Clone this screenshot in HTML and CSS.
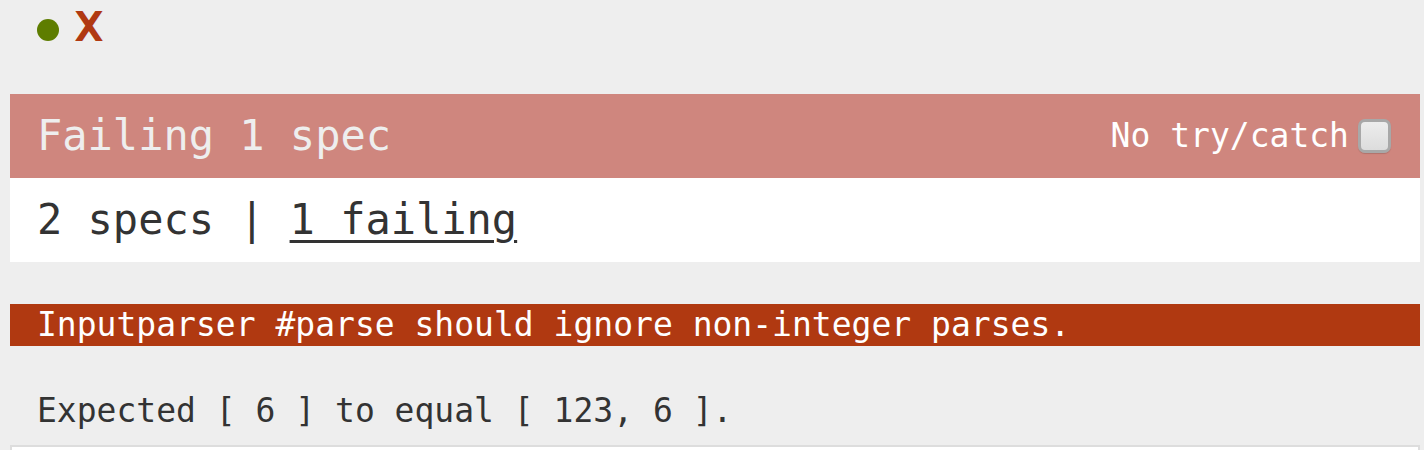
FILE: index.html
```
<!DOCTYPE html>
<html>
<head>
<meta charset="utf-8">
<link rel="stylesheet" href="styles.css">
</head>
<body>
<div class="reporter">
  <ul class="symbols">
    <li class="passed"></li>
    <li class="failed">X</li>
  </ul>
  <div class="bar failing">
    <span class="bar-text">Failing 1 spec</span>
    <label class="trycatch">No try/catch<input type="checkbox" class="check"></label>
  </div>
  <div class="bar menu">2 specs | <a class="link" href="#">1 failing</a></div>
  <div class="results">
    <div class="spec-detail">
      <div class="description">Inputparser #parse should ignore non-integer parses.</div>
      <div class="message">Expected [ 6 ] to equal [ 123, 6 ].</div>
      <div class="stack"></div>
    </div>
  </div>
</div>
</body>
</html>
```
FILE: styles.css
```
html, body {
  margin: 0;
  padding: 0;
  background: #eeeeee;
  overflow: hidden;
}
.reporter {
  margin: 0 4px 0 10px;
  font-family: "DejaVu Sans Mono", "Liberation Mono", monospace;
  color: #333333;
  font-size: 33px;
  line-height: 42px;
}
.symbols {
  list-style: none;
  margin: 0;
  padding: 0 0 0 27px;
  height: 94px;
  display: flex;
  align-items: flex-start;
}
.symbols .passed {
  width: 22px;
  height: 22px;
  border-radius: 50%;
  background: #5e7d00;
  margin-top: 19px;
}
.symbols .failed {
  margin-left: 18px;
  margin-top: 7px;
  color: #b03911;
  font-weight: bold;
  font-size: 40px;
  line-height: 40px;
  transform: scaleX(1.2);
}
.bar {
  display: flex;
  align-items: center;
  font-size: 42px;
  line-height: 84px;
  height: 84px;
  padding: 0 27px;
}
.failing {
  background: #cf867e;
  color: #eeeeee;
  justify-content: space-between;
}
.trycatch {
  display: flex;
  align-items: center;
  font-size: 33px;
  color: #ffffff;
  margin-right: 2px;
}
.check {
  -webkit-appearance: none;
  appearance: none;
  width: 33px;
  height: 34px;
  margin: 0 0 0 9px;
  border: 3px solid #a8a8a8;
  border-radius: 7px;
  background: linear-gradient(#ededed, #dcdcdc);
  box-sizing: border-box;
  box-shadow: 0 1px 1px rgba(0,0,0,0.15);
}
.menu {
  background: #ffffff;
  color: #333333;
}
.link {
  color: #333333;
  margin-left: 25px;
  text-decoration: underline;
  text-decoration-thickness: 3px;
  text-underline-offset: 6px;
}
.results {
  margin-top: 42px;
}
.description {
  background: #b03911;
  color: #ffffff;
  padding: 0 27px;
  line-height: 42px;
}
.message {
  padding: 44px 27px 0;
  line-height: 42px;
  color: #333333;
}
.stack {
  margin-top: 13px;
  height: 200px;
  background: #ffffff;
  border: 2px solid #dddddd;
}
```
